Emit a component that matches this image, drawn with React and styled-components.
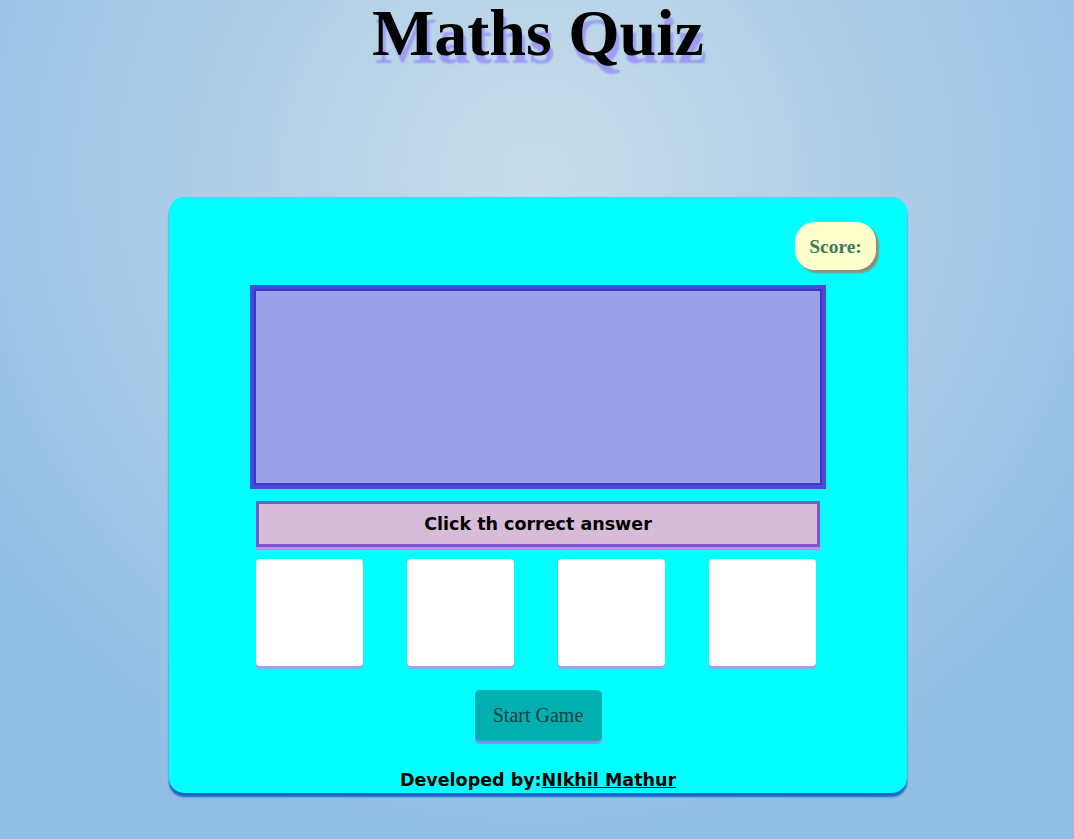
import React from 'react'
import styled, { createGlobalStyle } from 'styled-components'

const GlobalStyle = createGlobalStyle`
  html, body {
    margin: 0;
    padding: 0;
  }
  body {
    min-height: 839px;
    background: radial-gradient(circle at 50% 21%, #c8deeb 0%, #aacbe6 45%, #8fbde3 85%);
  }
`

const Page = styled.div`
  display: flex;
  flex-direction: column;
  align-items: center;
  padding: 0 0 40px 2px;
`

const Title = styled.h1`
  margin: 0;
  font-family: "Liberation Serif", "Times New Roman", serif;
  font-weight: bold;
  font-size: 66px;
  line-height: 66px;
  color: #000;
  text-shadow: 3px 8px 2px #9c9cf2;
`

const Container = styled.div`
  margin-top: 131px;
  width: 738px;
  height: 596px;
  box-sizing: border-box;
  padding-top: 25px;
  background: #00ffff;
  border-radius: 15px;
  box-shadow: 0 4px 2px #1666c8;
  display: flex;
  flex-direction: column;
  align-items: center;
`

const ScoreRow = styled.div`
  align-self: stretch;
  display: flex;
  justify-content: flex-end;
  padding-right: 31px;
`

const Score = styled.div`
  width: 81px;
  height: 48px;
  box-sizing: border-box;
  padding-top: 2px;
  display: flex;
  align-items: center;
  justify-content: center;
  background: #ffffcc;
  border-radius: 20px;
  box-shadow: 3px 3px 2px #8f8f7a;
  font-family: "Liberation Serif", "Times New Roman", serif;
  font-weight: bold;
  font-size: 19.5px;
  color: #3d7a5c;
`

const Question = styled.div`
  margin-top: 15px;
  width: 576px;
  height: 204px;
  box-sizing: border-box;
  background: #9da0ea;
  border: 4px solid #4848e4;
  box-shadow: inset 0 0 0 2px #3a3ab6;
`

const Instruction = styled.div`
  margin-top: 12px;
  width: 564px;
  height: 46px;
  box-sizing: border-box;
  background: #d6bcd6;
  border: 3px solid #7a58cc;
  box-shadow: 0 3px 1px #d482f2;
  display: flex;
  align-items: center;
  justify-content: center;
  font-family: "DejaVu Sans", "Liberation Sans", sans-serif;
  font-weight: bold;
  font-size: 17.5px;
  color: #000;
`

const Choices = styled.div`
  margin: 12px 4px 0 0;
  width: 561px;
  display: flex;
  justify-content: space-between;
`

const Choice = styled.div`
  width: 107px;
  height: 107px;
  background: #fff;
  border-radius: 4px;
  box-shadow: 0 3px 1px #9ea2f2;
`

const StartButton = styled.button`
  margin-top: 24px;
  width: 127px;
  height: 51px;
  border: none;
  border-radius: 5px;
  background: #00b0b0;
  box-shadow: 0 3px 1px #8a8af6;
  font-family: "Liberation Serif", "Times New Roman", serif;
  font-size: 20px;
  color: #17403f;
  padding: 0;
`

const Footer = styled.div`
  margin-top: 29px;
  font-family: "DejaVu Sans", "Liberation Sans", sans-serif;
  font-weight: bold;
  font-size: 17.5px;
  color: #000;
`

const Author = styled.a`
  color: #000;
  text-decoration: underline;
`

export default function App() {
  return (
    <>
      <GlobalStyle />
      <Page>
        <Title>Maths Quiz</Title>
        <Container>
          <ScoreRow>
            <Score>Score:</Score>
          </ScoreRow>
          <Question />
          <Instruction>Click th correct answer</Instruction>
          <Choices>
            <Choice />
            <Choice />
            <Choice />
            <Choice />
          </Choices>
          <StartButton>Start Game</StartButton>
          <Footer>
            Developed by:<Author href="#">NIkhil Mathur</Author>
          </Footer>
        </Container>
      </Page>
    </>
  )
}
